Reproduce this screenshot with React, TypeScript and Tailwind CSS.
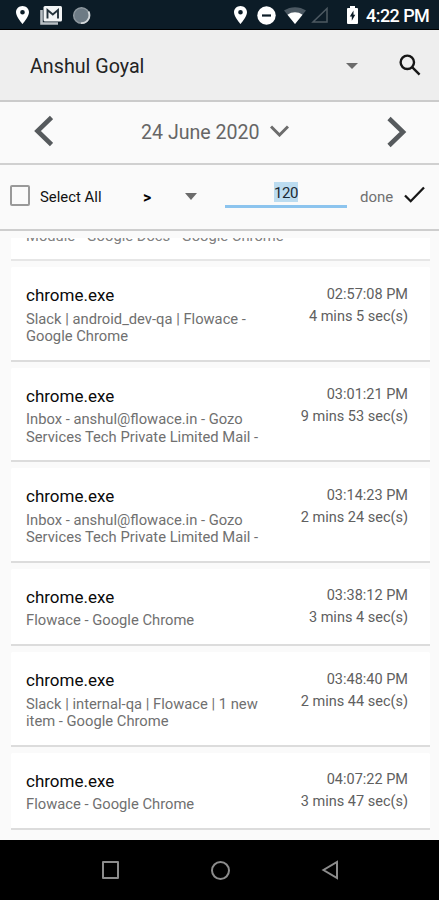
import React from "react";

type Entry = { lines: string[]; time: string; duration: string };

const entries: Entry[] = [
  { lines: ["Slack | android_dev-qa | Flowace -", "Google Chrome"], time: "02:57:08 PM", duration: "4 mins 5 sec(s)" },
  { lines: ["Inbox - anshul@flowace.in - Gozo", "Services Tech Private Limited Mail -"], time: "03:01:21 PM", duration: "9 mins 53 sec(s)" },
  { lines: ["Inbox - anshul@flowace.in - Gozo", "Services Tech Private Limited Mail -"], time: "03:14:23 PM", duration: "2 mins 24 sec(s)" },
  { lines: ["Flowace - Google Chrome"], time: "03:38:12 PM", duration: "3 mins 4 sec(s)" },
  { lines: ["Slack | internal-qa | Flowace | 1 new", "item - Google Chrome"], time: "03:48:40 PM", duration: "2 mins 44 sec(s)" },
  { lines: ["Flowace - Google Chrome"], time: "04:07:22 PM", duration: "3 mins 47 sec(s)" },
];

function Pin({ className }: { className: string }) {
  return (
    <svg className={className} width="13" height="18" viewBox="5 2 14 20" preserveAspectRatio="none" fill="#fff">
      <path d="M12 2C8.130 2 5 5.130 5 9c0 5.250 7 13 7 13s7-7.750 7-13c0-3.870-3.130-7-7-7zm0 9.500a2.500 2.500 0 1 1 0-5 2.500 2.500 0 0 1 0 5z" />
    </svg>
  );
}

function StatusBar() {
  return (
    <div className="flex h-[30px] shrink-0 items-center border-b border-black bg-[#0c1c27] pt-px">
      <Pin className="ml-4" />
      <svg className="ml-[11px]" width="23" height="20" viewBox="0 0 23 20">
        <path d="M1.500 5v13.500H18" fill="none" stroke="#b8bfc4" strokeWidth="2.600" />
        <rect x="3.500" y="1" width="18.500" height="15.500" rx="1.500" fill="#f2f4f5" />
        <path d="M7.500 13.500V5l5.300 4.500L18 5v8.500" fill="none" stroke="#24323b" strokeWidth="1.900" />
      </svg>
      <svg className="ml-[9px]" width="19" height="19" viewBox="0 0 19 19">
        <circle cx="9.500" cy="9.500" r="7.800" fill="#6d7b85" stroke="#8e989f" strokeWidth="1.500" />
        <path d="M16.500 5.500A8 8 0 0 1 9 17.200" fill="none" stroke="#d3d8db" strokeWidth="1.800" />
      </svg>
      <Pin className="ml-[143px]" />
      <svg className="ml-[10px]" width="19" height="19" viewBox="0 0 19 19">
        <circle cx="9.500" cy="9.500" r="9.200" fill="#fff" />
        <path d="M5 9.500h9" stroke="#0c1c27" strokeWidth="2.200" />
      </svg>
      <svg className="ml-2" width="22" height="17" viewBox="0 0 22 17">
        <path d="M0 3.500C6.500-1 15.500-1 22 3.500L11 17z" fill="#4c5963" />
        <path d="M3.500 7.800C8 4.500 14 4.500 18.500 7.800L11 17z" fill="#fff" />
      </svg>
      <svg className="ml-[5px]" width="18" height="18" viewBox="0 0 18 18">
        <path d="M16 2.500V16H2z" fill="none" stroke="#4d5962" strokeWidth="1.500" />
      </svg>
      <svg className="ml-[18px]" width="11" height="18" viewBox="0 0 11 18">
        <path d="M3 0h5v2h2q1 0 1 1v14q0 1-1 1H1q-1 0-1-1V3q0-1 1-1h2z" fill="#fff" />
        <path d="M6.500 4.500 2.800 10.500h2v4.200L8.300 8.700H6.500z" fill="#0c1c27" />
      </svg>
      <span className="ml-[8px] whitespace-nowrap pt-px text-[18px] leading-none font-medium tracking-[-0.55px] text-white">4:22 PM</span>
    </div>
  );
}

function Card({ entry }: { entry: Entry }) {
  return (
    <div
      className={`flex shrink-0 justify-between rounded-t-[2px] border-b-2 border-[#dcdcdc] bg-white pr-[22px] pl-[15px] ${
        entry.lines.length > 1 ? "h-[94.500px]" : "h-[77.500px]"
      }`}
    >
      <div className="pt-[17px] whitespace-nowrap">
        <div className="text-[17px] leading-[22px] text-[#0a0a0a]">chrome.exe</div>
        <div className="mt-[4.500px] text-[14.750px] leading-[17.500px] text-[#707070]">
          {entry.lines.map((line) => (
            <div key={line}>{line}</div>
          ))}
        </div>
      </div>
      <div className="pt-[16.500px] text-right text-[14.500px] leading-[22px] whitespace-nowrap text-[#606060]">
        <div>{entry.time}</div>
        <div>{entry.duration}</div>
      </div>
    </div>
  );
}

export default function App() {
  return (
    <div className="flex h-[900px] w-[439px] flex-col overflow-hidden bg-[#fafafa] font-[Roboto,sans-serif]">
      <StatusBar />

      <header className="flex h-[72px] shrink-0 items-center border-b-2 border-[#cbcbcb] bg-[#eeeeee]">
        <span className="ml-[30px] w-[316px] pt-[3px] text-[19.700px] whitespace-nowrap text-[#242424]">Anshul Goyal</span>
        <svg className="mt-px" width="12" height="6" viewBox="0 0 12 6">
          <path d="M0 0h12L6 6z" fill="#6b6b6b" />
        </svg>
        <svg className="ml-[41px]" width="22" height="22" viewBox="0 0 23 23" fill="none" stroke="#161616" strokeWidth="2.500">
          <circle cx="8.700" cy="8.700" r="7" />
          <path d="m14 14 7.500 7.500" />
        </svg>
      </header>

      <div className="flex h-[63px] shrink-0 items-center border-b-2 border-[#d0d0d0]">
        <svg className="mb-[3px] ml-[33px]" width="20" height="32" viewBox="0 0 20 32" fill="none" stroke="#565a5d" strokeWidth="4.600">
          <path d="M18.500 2.500 4.500 16l14 13.500" />
        </svg>
        <span className="ml-[88px] w-[129px] pt-px text-[19.600px] whitespace-nowrap text-[#666666]">24 June 2020</span>
        <svg className="mb-[3px]" width="19" height="12" viewBox="0 0 19 12" fill="none" stroke="#6c6c6c" strokeWidth="3">
          <path d="m1 1.500 8.500 8.500L18 1.500" />
        </svg>
        <svg className="mb-[2px] ml-[98px]" width="20" height="32" viewBox="0 0 20 32" fill="none" stroke="#565a5d" strokeWidth="4.600">
          <path d="m2 2.500 14 13.500L2 29.500" />
        </svg>
      </div>

      <div className="flex h-[66px] shrink-0 items-center border-b-2 border-[#cecece]">
        <span className="mb-[3px] ml-[10px] h-[21px] w-[20px] rounded-[2px] border-2 border-[#999999]" />
        <span className="ml-[10px] w-[103px] pt-px text-[14.900px] whitespace-nowrap text-[#111111]">Select All</span>
        <span className="w-[42px] pt-px text-[16px] font-bold text-black">&gt;</span>
        <svg className="mb-[2px]" width="12" height="7" viewBox="0 0 12 7">
          <path d="M0 0h12L6 7z" fill="#6b6b6b" />
        </svg>
        <div className="mb-[5px] ml-[28px] flex h-[26px] w-[122px] justify-center border-b-[3px] border-[#8cc4ee]">
          <span className="h-[20px] bg-[#bcdcf0] text-[15px] leading-[22px] tracking-[-0.4px] text-[#1c2a33]">120</span>
        </div>
        <span className="ml-[13px] w-[44px] pt-px text-[15px] text-[#707070]">done</span>
        <svg className="mb-[6px]" width="21" height="17" viewBox="0 0 21 17" fill="none" stroke="#161616" strokeWidth="2.300">
          <path d="m1 9.500 5.700 5.700L20 1.500" />
        </svg>
      </div>

      <main className="flex min-h-0 flex-1 flex-col gap-[6px] px-[11px] pt-[6.500px] pr-[9px]">
        <div className="flex h-[23.500px] shrink-0 flex-col justify-end overflow-hidden border-b-2 border-[#e6e6e6] bg-white pl-[15px]">
          <div className="pb-[14px] text-[14.750px] leading-[17.500px] whitespace-nowrap text-[#808080]">
            Module - Google Docs - Google Chrome
          </div>
        </div>
        {entries.map((entry) => (
          <Card key={entry.time} entry={entry} />
        ))}
      </main>

      <nav className="flex h-[60px] shrink-0 items-center bg-black text-[#8c8c8c]">
        <span className="ml-[102px] h-[18px] w-[17px] rounded-[1px] border-2 border-current" />
        <span className="ml-[92px] size-[19px] rounded-full border-2 border-current" />
        <svg className="ml-[91px]" width="19" height="20" viewBox="0 0 19 20" fill="none" stroke="currentColor" strokeWidth="2">
          <path d="M16 2v16L2.500 10z" />
        </svg>
      </nav>
    </div>
  );
}
